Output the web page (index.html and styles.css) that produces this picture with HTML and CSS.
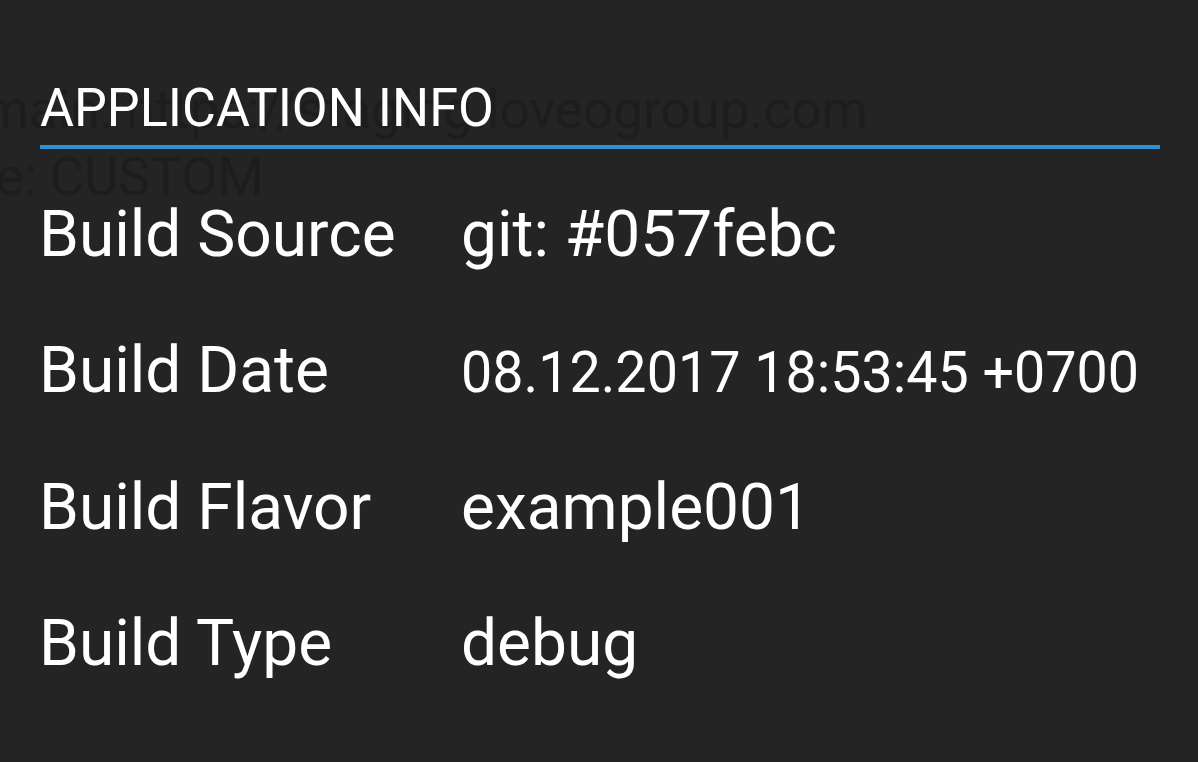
FILE: index.html
```html
<!DOCTYPE html>
<html>
<head>
<meta charset="utf-8">
<link rel="stylesheet" href="styles.css">
</head>
<body>
<div class="screen">
  <div class="ghost" aria-hidden="true">
    <div class="ghost-line ghost-domain">Domain: https://staging.loveogroup.com</div>
    <div class="ghost-line ghost-type">Type: CUSTOM</div>
  </div>
  <div class="panel">
    <div class="section-head"><span class="section-title">APPLICATION INFO</span></div>
    <div class="rows">
      <div class="label">Build Source</div><div class="value">git: #057febc</div>
      <div class="label">Build Date</div><div class="value"><span class="condensed">08.12.2017 18:53:45 +0700</span></div>
      <div class="label">Build Flavor</div><div class="value">example001</div>
      <div class="label">Build Type</div><div class="value">debug</div>
    </div>
  </div>
</div>
</body>
</html>
```
FILE: styles.css
```css
html, body {
  margin: 0;
  padding: 0;
  background: #242424;
}
body {
  font-family: Roboto, "Noto Sans", sans-serif;
  color: #ffffff;
  width: 1198px;
  height: 762px;
  overflow: hidden;
}
.screen {
  position: relative;
  width: 1198px;
  height: 762px;
  overflow: hidden;
}
.ghost {
  position: absolute;
  inset: 0;
  color: #1d1d1d;
  font-size: 53px;
  line-height: 68px;
  white-space: nowrap;
}
.ghost-line {
  position: absolute;
}
.ghost-domain {
  right: 330px;
  top: 76px;
}
.ghost-type {
  left: -89px;
  top: 143px;
}
.panel {
  position: relative;
  padding: 81px 38px 0 40px;
}
.section-head {
  border-bottom: 4px solid #2a92d3;
  padding: 0 0 10px 0;
  height: 54px;
}
.section-title {
  display: inline-block;
  font-size: 54px;
  line-height: 54px;
  transform: scaleX(0.965);
  transform-origin: left top;
  white-space: nowrap;
}
.rows {
  margin-top: 18px;
  margin-left: -1px;
  display: grid;
  grid-template-columns: 422px 1fr;
  font-size: 64px;
  line-height: 136px;
}
.label, .value {
  white-space: nowrap;
}
.condensed {
  display: inline-block;
  font-size: 58px;
  transform: scaleX(0.959);
  transform-origin: left center;
}
```
